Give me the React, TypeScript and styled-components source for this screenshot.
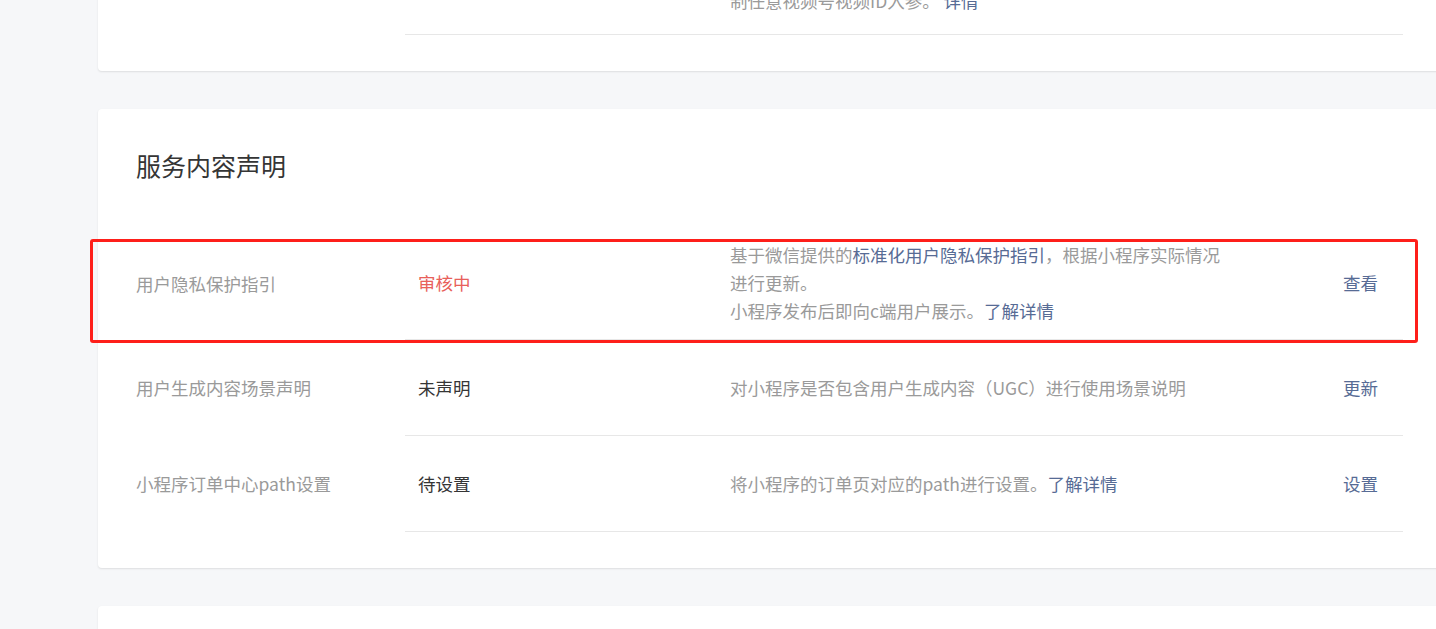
import type { ReactNode } from "react";
import styled, { createGlobalStyle } from "styled-components";

type Item = {
  label: string;
  status: string;
  tone?: "pending" | "normal";
  desc: ReactNode[];
  action: string;
  marked?: boolean;
};

function getItems(): Item[] {
  return [
    {
      label: "用户隐私保护指引",
      status: "审核中",
      tone: "pending",
      desc: [
        <>
          基于微信提供的<Link>标准化用户隐私保护指引</Link>，根据小程序实际情况进行更新。
        </>,
        <>
          小程序发布后即向c端用户展示。<Link>了解详情</Link>
        </>,
      ],
      action: "查看",
      marked: true,
    },
    {
      label: "用户生成内容场景声明",
      status: "未声明",
      desc: ["对小程序是否包含用户生成内容（UGC）进行使用场景说明"],
      action: "更新",
    },
    {
      label: "小程序订单中心path设置",
      status: "待设置",
      desc: [
        <>
          将小程序的订单页对应的path进行设置。<Link>了解详情</Link>
        </>,
      ],
      action: "设置",
    },
  ];
}

export default function App() {
  const items = getItems();

  return (
    <Page>
      <Card $tail>
        <Row>
          <Label>视频号视频</Label>
          <RowBody>
            <Status>已开通</Status>
            <Desc>
              <Para>开通后可在小程序内打开视频号视频，不限</Para>
              <Para>
                制任意视频号视频ID入参。 <Link>详情</Link>
              </Para>
            </Desc>
            <Action>设置</Action>
          </RowBody>
        </Row>
      </Card>

      <Card>
        <Title>服务内容声明</Title>
        <Rows>
          {items.map((item) => (
            <Row key={item.label}>
              {item.marked && <Highlight />}
              <Label>{item.label}</Label>
              <RowBody>
                <Status $tone={item.tone}>{item.status}</Status>
                <Desc>
                  {item.desc.map((d, i) => (
                    <Para key={i}>{d}</Para>
                  ))}
                </Desc>
                <Action>{item.action}</Action>
              </RowBody>
            </Row>
          ))}
        </Rows>
      </Card>

      <Card $blank />
      <GlobalStyle />
    </Page>
  );
}

const GlobalStyle = createGlobalStyle`
  html, body {
    margin: 0;
    padding: 0;
    background: #f6f7f9;
    overflow: hidden;
  }
  body {
    font-family: "Noto Sans CJK SC", "Noto Sans", sans-serif;
    font-size: 17.5px;
    color: #353535;
  }
`;

const Page = styled.main`
  display: flex;
  flex-direction: column;
  gap: 38px;
  margin-top: -61px;
  padding-left: 98px;
  width: 1400px;
`;

const Card = styled.section<{ $tail?: boolean; $blank?: boolean }>`
  background: #fff;
  border-radius: 4px;
  box-shadow: 0 1px 2px rgba(0, 0, 0, 0.1);
  padding: ${(p) => (p.$tail ? "0 0 36px 38px" : "40px 0 36px 38px")};
  min-height: ${(p) => (p.$blank ? "200px" : "auto")};
`;

const Title = styled.h2`
  margin: 0 0 46px;
  font-size: 25px;
  line-height: 32px;
  font-weight: 400;
  color: #353535;
`;

const Rows = styled.div`
  display: flex;
  flex-direction: column;
`;

const Row = styled.div`
  position: relative;
  display: flex;
  width: 1267px;
`;

const Label = styled.div`
  flex: 0 0 269px;
  display: flex;
  align-items: center;
  color: #9a9a9a;
  line-height: 28px;
`;

const RowBody = styled.div`
  flex: 1;
  display: flex;
  align-items: center;
  min-height: 96px;
  box-sizing: border-box;
  padding: 14px 25px 14px 13px;
  border-bottom: 1px solid #e7e7e7;
  line-height: 28px;
`;

const Status = styled.div<{ $tone?: "pending" | "normal" }>`
  flex: 0 0 312px;
  color: ${(p) => (p.$tone === "pending" ? "#e8605a" : "#353535")};
`;

const Desc = styled.div`
  flex: 1;
  color: #9a9a9a;
`;

const Para = styled.p`
  margin: 0;
  max-width: 500px;
`;

const Link = styled.a`
  color: #576b95;
  text-decoration: none;
  cursor: pointer;
`;

const Action = styled.a`
  color: #576b95;
  cursor: pointer;
  white-space: nowrap;
`;

const Highlight = styled.div`
  position: absolute;
  top: 12px;
  bottom: -3px;
  left: -46px;
  right: -15px;
  border: 3px solid #fe1f1a;
  border-radius: 3px;
  pointer-events: none;
`;
